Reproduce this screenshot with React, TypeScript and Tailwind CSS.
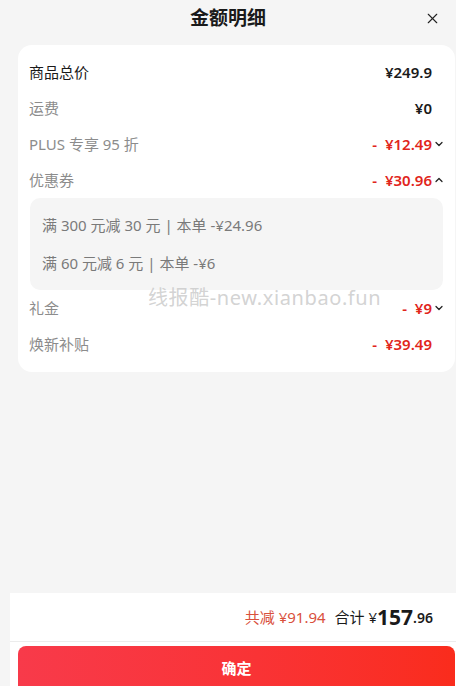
import { X, ChevronDown, ChevronUp } from "lucide-react";

const FONT = { fontFamily: '"Noto Sans", "Noto Sans CJK SC", sans-serif' };

type Row = {
  label: string;
  value: string;
  discount?: boolean;
  dark?: boolean;
  chevron?: "up" | "down";
};

function PriceRow({ row }: { row: Row }) {
  return (
    <div className="flex h-9 items-center justify-between pl-[11px] pr-[10px]">
      <span className={`text-[15px] ${row.dark ? "text-[#1a1a1a]" : "text-[#8c8c8c]"}`}>{row.label}</span>
      <span className="flex items-center">
        <span
          className={`whitespace-pre text-[15px] font-semibold ${row.discount ? "text-[#e1251b]" : "text-[#1a1a1a]"}`}
        >
          {row.value}
        </span>
        {row.chevron === "down" && <ChevronDown size={12} strokeWidth={2.5} className="ml-px text-[#222]" />}
        {row.chevron === "up" && <ChevronUp size={12} strokeWidth={2.5} className="ml-px text-[#222]" />}
        {!row.chevron && <span className="w-[13px]" />}
      </span>
    </div>
  );
}

export default function App() {
  return (
    <div className="relative flex h-[686px] w-[456px] flex-col overflow-hidden bg-[#f5f5f5]" style={FONT}>
      {/* Header */}
      <div className="relative flex h-[37px] items-center justify-center">
        <h1 className="text-[19px] font-bold text-[#1a1a1a]">金额明细</h1>
        <X size={17} strokeWidth={1.6} className="absolute right-[15px] top-[10px] text-[#222]" />
      </div>

      {/* Detail card */}
      <div className="ml-[18px] mt-[8px] w-[437px] rounded-[14px] bg-white pb-[10px] pt-[9px]">
        <PriceRow row={{ label: "商品总价", value: "¥249.9", dark: true }} />
        <PriceRow row={{ label: "运费", value: "¥0" }} />
        <PriceRow row={{ label: "PLUS 专享 95 折", value: "-  ¥12.49", discount: true, chevron: "down" }} />
        <PriceRow row={{ label: "优惠券", value: "-  ¥30.96", discount: true, chevron: "up" }} />
        <div className="mx-[12px] rounded-[10px] bg-[#f5f5f5] px-[12px] py-[8px]">
          <div className="flex h-[38px] items-center text-[15px] text-[#7a7a7a]">满 300 元减 30 元 | 本单 -¥24.96</div>
          <div className="flex h-[38px] items-center text-[15px] text-[#7a7a7a]">满 60 元减 6 元 | 本单 -¥6</div>
        </div>
        <PriceRow row={{ label: "礼金", value: "-  ¥9", discount: true, chevron: "down" }} />
        <PriceRow row={{ label: "焕新补贴", value: "-  ¥39.49", discount: true }} />
      </div>

      <div className="flex-1" />

      {/* Footer */}
      <div className="ml-[10px] bg-white">
        <div className="flex h-[49px] items-center justify-end border-b border-[#ececec] pr-[23px]">
          <span className="text-[15px] text-[#d9503c]">共减 ¥91.94</span>
          <span className="ml-[9px] text-[15px] text-[#1a1a1a]">合计 ¥</span>
          <span className="text-[21px] font-bold leading-none text-[#1a1a1a]">157</span>
          <span className="text-[14px] font-semibold text-[#1a1a1a]">.96</span>
        </div>
        <div className="h-[44px] pl-[8px] pt-[4px]">
          <button className="flex h-[44px] w-[437px] items-center justify-center rounded-t-[8px] bg-gradient-to-r from-[#f83a4a] to-[#fa2c1c] text-[15px] font-semibold text-white">
            确定
          </button>
        </div>
      </div>

      {/* Watermark */}
      <div className="pointer-events-none absolute left-[148px] top-[283px] text-[20px] tracking-[0.6px] text-[#c8c8c8]/80">
        线报酷-new.xianbao.fun
      </div>
    </div>
  );
}
